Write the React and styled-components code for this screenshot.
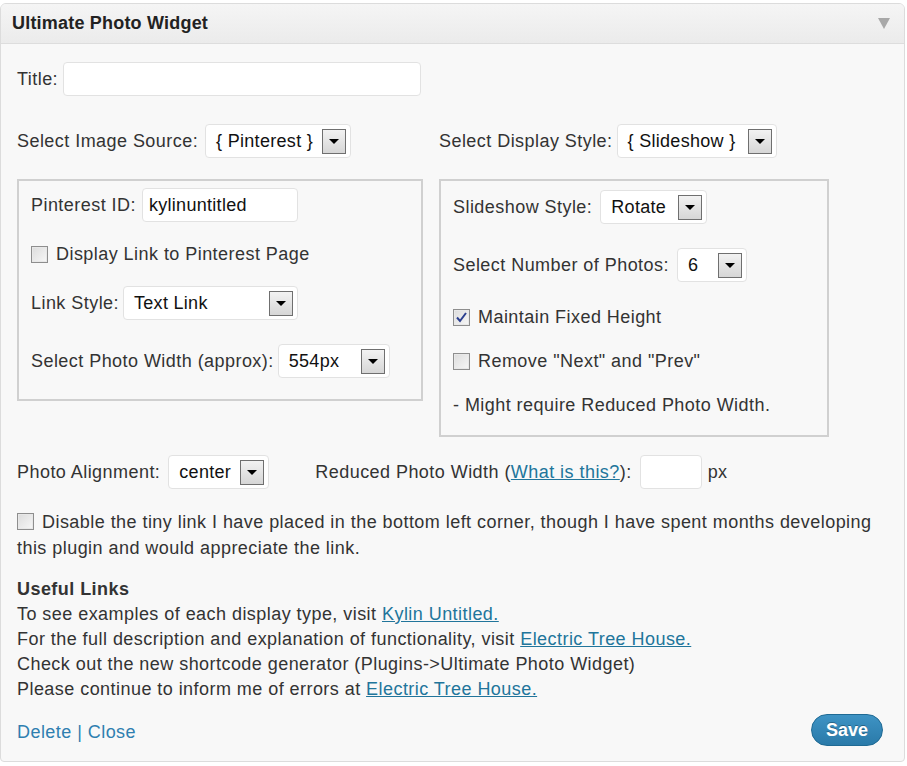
import React from 'react';
import styled, { createGlobalStyle } from 'styled-components';

const GlobalStyle = createGlobalStyle`
  body {
    margin: 0;
    background: #ffffff;
    font-family: "Liberation Sans", Arial, sans-serif;
    color: #333333;
  }
`;

// widget shell
const Widget = styled.div`
  margin-top: 3px;
  width: 903px;
  border: 1px solid #dcdcdc;
  border-radius: 6px 6px 4px 4px;
  background: #f8f8f8;
  overflow: hidden;
`;

const Header = styled.div`
  height: 39px;
  display: flex;
  align-items: center;
  justify-content: space-between;
  padding: 0 14px 0 11px;
  background: linear-gradient(#f5f5f5, #ebebeb);
  border-bottom: 1px solid #dddddd;
  font-size: 18px;
  font-weight: bold;
  letter-spacing: 0.2px;
  color: #222;
`;

const HeaderArrow = styled.span`
  width: 0;
  height: 0;
  border-left: 6px solid transparent;
  border-right: 6px solid transparent;
  border-top: 11px solid #a8a8a8;
`;

const Body = styled.div`
  padding: 18px 16px 15px 16px;
  font-size: 18px;
  letter-spacing: 0.45px;
`;

const Row = styled.div`
  display: flex;
  align-items: center;
  gap: ${(p) => p.gap || 6}px;
  margin-top: ${(p) => p.top || 0}px;
  height: ${(p) => p.h || 34}px;
`;

const Columns = styled.div`
  display: grid;
  grid-template-columns: 406px 390px;
  column-gap: 16px;
  margin-top: 28px;
  align-items: start;
`;

const Column = styled.div`
  display: flex;
  flex-direction: column;
`;

const Fieldset = styled.div`
  margin-top: 21px;
  border: 2px solid #d0d0d0;
  padding: ${(p) => p.pad || '8px 12px 20px 12px'};
  display: flex;
  flex-direction: column;
`;

const TextInput = styled.div`
  width: ${(p) => p.w}px;
  height: 34px;
  box-sizing: border-box;
  background: #fff;
  border: 1px solid #e2e2e2;
  border-radius: 4px;
  display: flex;
  align-items: center;
  padding-left: 6px;
  color: #111;
  margin-left: ${(p) => p.ml || 0}px;
  letter-spacing: 0.3px;
`;

const SelectBox = styled.div`
  width: ${(p) => p.w}px;
  height: 34px;
  box-sizing: border-box;
  background: #fff;
  border: 1px solid #e2e2e2;
  border-radius: 4px;
  display: flex;
  align-items: center;
  justify-content: space-between;
  padding: 0 4px 0 ${(p) => p.pl || 10}px;
  color: #111;
  margin-left: ${(p) => p.ml || 0}px;
  letter-spacing: 0.3px;
`;

const DropButton = styled.span`
  width: 24px;
  height: 25px;
  box-sizing: border-box;
  border: 1px solid #6f6f6f;
  background: linear-gradient(#f2f2f2, #d6d6d6);
  display: flex;
  align-items: center;
  justify-content: center;
  &::after {
    content: '';
    border-left: 5px solid transparent;
    border-right: 5px solid transparent;
    border-top: 5px solid #000;
  }
`;

const Select = ({ w, value, pl, ml }) => (
  <SelectBox w={w} pl={pl} ml={ml}>
    <span>{value}</span>
    <DropButton />
  </SelectBox>
);

const Box = styled.span`
  width: 17px;
  height: 17px;
  flex: none;
  box-sizing: border-box;
  border: 1px solid #8e8e8e;
  background: linear-gradient(135deg, #dcdcdc, #f7f7f7);
  box-shadow: inset 0 0 0 1px #e8e8e8;
  display: ${(p) => (p.inline ? 'inline-flex' : 'flex')};
  vertical-align: ${(p) => (p.inline ? '-2px' : 'baseline')};
  margin-right: ${(p) => (p.inline ? 8 : 0)}px;
  align-items: center;
  justify-content: center;
`;

const Checkbox = ({ checked, inline }) => (
  <Box inline={inline}>
    {checked && (
      <svg width="13" height="13" viewBox="0 0 13 13">
        <path d="M2 6.5 L5 10 L11 2" fill="none" stroke="#2b3f8f" strokeWidth="2" />
      </svg>
    )}
  </Box>
);

const Link = styled.a`
  color: #21759b;
  text-decoration: underline;
  cursor: pointer;
`;

const CheckPara = styled.div`
  margin-top: 20px;
  line-height: 26px;
  padding-right: 10px;
`;

const Links = styled.div`
  margin-top: 16px;
  line-height: 25px;
`;

const Heading = styled.div`
  font-weight: bold;
`;

const Footer = styled.div`
  display: flex;
  align-items: center;
  justify-content: space-between;
  margin-top: 12px;
  padding-right: 5px;
`;

const FooterLinks = styled.div`
  color: #2f7fb0;
  padding-top: 5px;
  a {
    color: #2f7fb0;
    text-decoration: none;
  }
`;

const SaveButton = styled.button`
  width: 72px;
  height: 32px;
  border-radius: 16px;
  border: 1px solid #1f6a94;
  background: linear-gradient(#3e93c4, #2a7aa9);
  color: #fff;
  font-family: "Liberation Sans", Arial, sans-serif;
  font-weight: bold;
  font-size: 18px;
  padding: 0;
  text-shadow: 0 -1px 0 rgba(0, 0, 0, 0.3);
`;

const Note = styled.div`
  height: 30px;
  display: flex;
  align-items: center;
  margin-top: 12px;
`;

const Spaced = styled.span`
  margin-left: ${(p) => p.ml}px;
`;

export default function App() {
  return (
    <>
      <GlobalStyle />
      <Widget>
        <Header>
          <span>Ultimate Photo Widget</span>
          <HeaderArrow />
        </Header>
        <Body>
          <Row gap={5}>
            <span>Title:</span>
            <TextInput w={358} />
          </Row>

          <Columns>
            <Column>
              <Row>
                <span>Select Image Source:</span>
                <Select w={146} value="{ Pinterest }" ml={1} pl={10} />
              </Row>
              <Fieldset pad="7px 12px 21px 12px">
                <Row>
                  <span>Pinterest ID:</span>
                  <TextInput w={156}>kylinuntitled</TextInput>
                </Row>
                <Row top={15} h={34} gap={8}>
                  <Checkbox />
                  <span>Display Link to Pinterest Page</span>
                </Row>
                <Row top={15}>
                  <span>Link Style:</span>
                  <Select w={175} value="Text Link" ml={-2} />
                </Row>
                <Row top={24}>
                  <span>Select Photo Width (approx):</span>
                  <Select w={112} value="554px" ml={-2} />
                </Row>
              </Fieldset>
            </Column>
            <Column>
              <Row>
                <span>Select Display Style:</span>
                <Select w={160} value="{ Slideshow }" ml={-2} pl={10} />
              </Row>
              <Fieldset pad="9px 12px 15px 12px">
                <Row>
                  <span>Slideshow Style:</span>
                  <Select w={107} value="Rotate" ml={2} />
                </Row>
                <Row top={24}>
                  <span>Select Number of Photos:</span>
                  <Select w={70} value="6" ml={2} />
                </Row>
                <Row top={18} h={34} gap={8}>
                  <Checkbox checked />
                  <span>Maintain Fixed Height</span>
                </Row>
                <Row top={10} h={34} gap={8}>
                  <Checkbox />
                  <span>Remove "Next" and "Prev"</span>
                </Row>
                <Note>- Might require Reduced Photo Width.</Note>
              </Fieldset>
            </Column>
          </Columns>

          <Row top={18}>
            <span>Photo Alignment:</span>
            <Select w={101} value="center" pl={10} ml={2} />
            <Spaced ml={40}>
              Reduced Photo Width (<Link>What is this?</Link>):
            </Spaced>
            <TextInput w={62} ml={2} />
            <span>px</span>
          </Row>

          <CheckPara>
            <Checkbox inline />
            Disable the tiny link I have placed in the bottom left corner, though I have spent months developing this
            plugin and would appreciate the link.
          </CheckPara>

          <Links>
            <Heading>Useful Links</Heading>
            <div>
              To see examples of each display type, visit <Link>Kylin Untitled. </Link>
            </div>
            <div>
              For the full description and explanation of functionality, visit <Link>Electric Tree House.</Link>
            </div>
            <div>Check out the new shortcode generator (Plugins-&gt;Ultimate Photo Widget)</div>
            <div>
              Please continue to inform me of errors at <Link>Electric Tree House.</Link>
            </div>
          </Links>

          <Footer>
            <FooterLinks>
              <a>Delete</a> | <a>Close</a>
            </FooterLinks>
            <SaveButton>Save</SaveButton>
          </Footer>
        </Body>
      </Widget>
    </>
  );
}
